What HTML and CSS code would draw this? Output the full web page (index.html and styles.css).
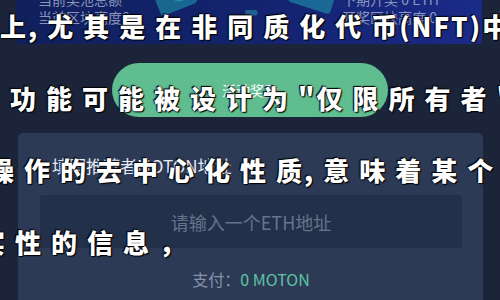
FILE: index.html
```html
<!DOCTYPE html>
<html lang="zh-CN">
<head>
<meta charset="utf-8">
<title>活动奖励</title>
<link rel="stylesheet" href="styles.css">
</head>
<body>
<div class="page">
  <div class="top-card">
    <div class="info">
      <div class="info-line">当前奖池总额</div>
      <div class="info-line">当前区块高度0</div>
    </div>
    <svg class="art" width="220" height="30" viewBox="0 0 220 30">
      <g fill="#1f9fb0" opacity="0.55">
        <rect x="10" y="-8" width="44" height="22" rx="4" transform="rotate(-22 32 3)"/>
        <rect x="160" y="-10" width="50" height="22" rx="4" transform="rotate(18 185 1)"/>
      </g>
      <g fill="#3fd0d8" opacity="0.35">
        <rect x="30" y="-2" width="10" height="6" rx="2"/>
        <rect x="110" y="14" width="14" height="6" rx="2"/>
      </g>
    </svg>
    <div class="info info-right">
      <div class="info-line">下期开奖 0 ETH</div>
      <div class="info-line">开奖区块高度 0</div>
    </div>
  </div>

  <div class="btn-wrap">
    <button class="reward-btn">活动奖励</button>
  </div>

  <div class="panel">
    <div class="label">填写推荐者MOTON地址</div>
    <div class="input">请输入一个ETH地址</div>
    <div class="pay">支付：<span class="pay-amount">0 MOTON</span></div>
  </div>
</div>

<div class="overlay">
  <div class="ov-line ov1"><span class="nar">上</span>,尤其是在非同质化代<span class="nar">币(NFT)</span>中</div>
  <div class="ov-line ov2">功能可能被设计为<span class="nar">"</span>仅限所有者<span class="nar">"</span></div>
  <div class="ov-line ov3">操作的去中心化性<span class="nar">质</span>,意味着某个特</div>
  <div class="ov-line ov4">实性的信息<span class="nar">，</span></div>
</div>
</body>
</html>
```

FILE: styles.css
```css
html, body {
  margin: 0;
  padding: 0;
}
body {
  width: 500px;
  height: 300px;
  overflow: hidden;
  background: #1b2438;
  font-family: "Noto Sans CJK SC", "Noto Sans", sans-serif;
  position: relative;
}
.page {
  display: flex;
  flex-direction: column;
}
.top-card {
  margin: -12px 18px 0 16px;
  height: 56px;
  box-sizing: border-box;
  padding: 2px 43px 0 22px;
  background: linear-gradient(90deg, #10205c 0%, #13236e 50%, #1a2a88 100%);
  border-radius: 0 0 4px 4px;
  display: flex;
  align-items: flex-start;
}
.info-line {
  font-size: 14px;
  line-height: 18px;
  color: #a9b2cf;
  opacity: 0.8;
  white-space: nowrap;
}
.art {
  margin: 6px 0 0 18px;
  display: block;
}
.info-right {
  margin-left: auto;
}
.btn-wrap {
  display: flex;
  justify-content: center;
  margin-top: 19px;
}
.reward-btn {
  width: 276px;
  height: 54px;
  border: none;
  border-radius: 27px;
  background: #5fbd8f;
  color: #ffffff;
  font-family: "Noto Sans CJK SC", sans-serif;
  font-size: 14px;
  padding: 0;
}
.panel {
  margin: 16px 0 0 18px;
  width: 465px;
  height: 200px;
  box-sizing: border-box;
  background: #2c3a56;
  border-radius: 5px;
  padding: 23px 21px 0 22px;
}
.label {
  font-size: 17px;
  line-height: 20px;
  color: #e6ebf4;
  padding-left: 12px;
}
.input {
  margin-top: 19px;
  height: 53px;
  background: #23304a;
  border-radius: 3px;
  display: flex;
  align-items: center;
  justify-content: center;
  font-size: 18px;
  color: #66738d;
}
.pay {
  margin-top: 21px;
  text-align: center;
  font-size: 16px;
  line-height: 20px;
  color: #8792aa;
}
.pay-amount {
  color: #5ec4a2;
}
.overlay {
  position: absolute;
  top: -10px;
  left: 0;
  width: 500px;
  pointer-events: none;
}
.ov-line {
  font-family: "Noto Sans CJK SC", sans-serif;
  font-weight: 900;
  font-size: 26px;
  line-height: 72px;
  height: 72px;
  letter-spacing: 10px;
  color: #ffffff;
  white-space: nowrap;
  text-shadow: 0 0 2px #000, 1px 1px 1px #000, -1px -1px 1px #000;
}
.nar {
  letter-spacing: 2px;
}
.ov1 { margin-left: 0; }
.ov2 { margin-left: 10px; }
.ov3 { margin-left: -12px; }
.ov4 { margin-left: -21px; }
```
